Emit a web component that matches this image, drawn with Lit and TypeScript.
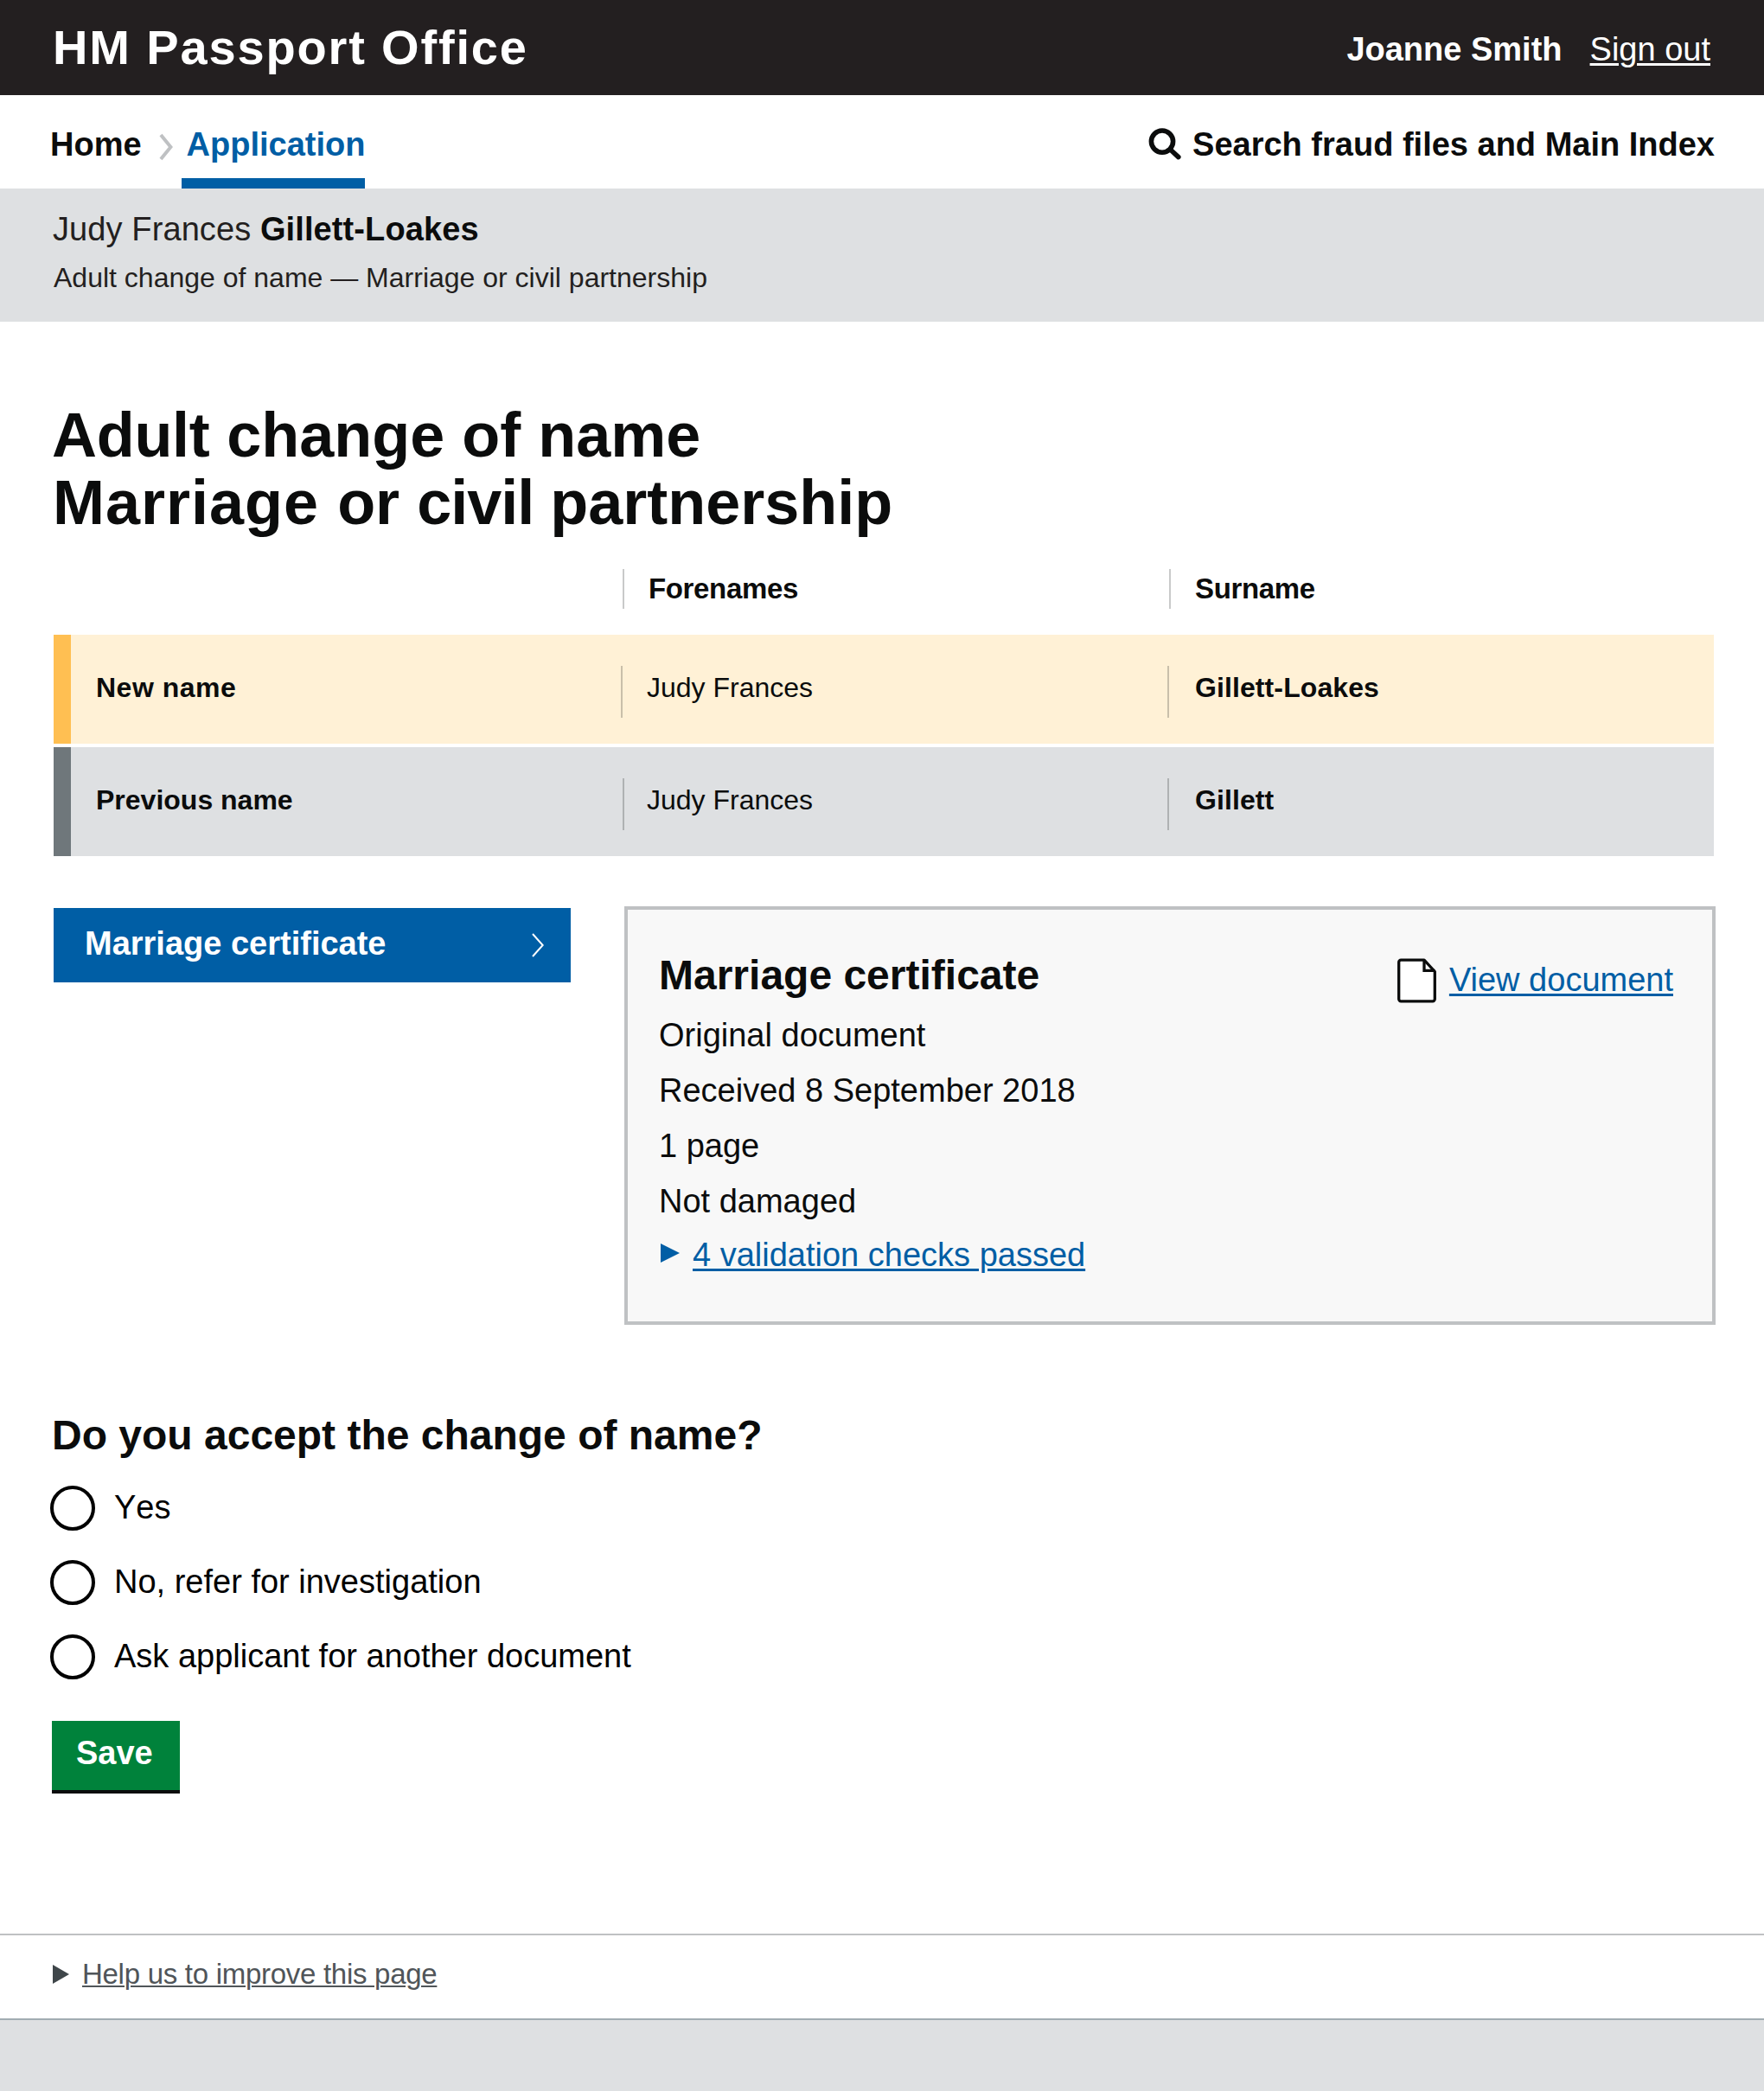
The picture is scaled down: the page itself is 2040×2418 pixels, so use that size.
import { LitElement, html, css, svg } from "lit";
import { customElement, state } from "lit/decorators.js";

interface NameRow {
  kind: "new" | "previous";
  label: string;
  forenames: string;
  surname: string;
}

const nameRows: NameRow[] = [
  { kind: "new", label: "New name", forenames: "Judy Frances", surname: "Gillett-Loakes" },
  { kind: "previous", label: "Previous name", forenames: "Judy Frances", surname: "Gillett" },
];

const documentFacts = ["Original document", "Received 8 September 2018", "1 page", "Not damaged"];

const options = ["Yes", "No, refer for investigation", "Ask applicant for another document"];

const chevron = (w: number, h: number, stroke: number) => html`
  <svg class="chevron" width=${w} height=${h} viewBox="0 0 ${w} ${h}" aria-hidden="true">
    ${svg`<path d="M${stroke / 2} ${stroke / 2}L${w - stroke * 0.65} ${h / 2}L${stroke / 2} ${h - stroke / 2}"
      fill="none" stroke="currentColor" stroke-width=${stroke} />`}
  </svg>
`;

@customElement("app-root")
export class AppRoot extends LitElement {
  @state() private selected = -1;

  static styles = css`
    :host {
      display: flex;
      flex-direction: column;
      min-height: 2418px;
      background: #fff;
      color: #0b0c0c;
      font-family: "Liberation Sans", Arial, Helvetica, sans-serif;
      font-size: 38px;
      line-height: 42px;
    }
    * {
      box-sizing: border-box;
    }
    h1, h2, p {
      margin: 0;
      font-weight: 400;
    }
    svg {
      display: block;
      flex: none;
    }
    a {
      color: inherit;
      text-decoration: none;
    }
    .link {
      color: #005ea5;
      text-decoration: underline;
      text-decoration-thickness: 3px;
      text-underline-offset: 3px;
    }
    .masthead {
      display: flex;
      justify-content: space-between;
      height: 110px;
      padding: 0 62px 0 61px;
      background: #231f20;
      color: #fff;
      white-space: nowrap;
    }
    .brand {
      font-size: 56px;
      line-height: 109px;
      font-weight: 700;
      letter-spacing: 1.85px;
    }
    .account {
      display: flex;
      gap: 32px;
      padding-top: 36px;
    }
    .account .link {
      color: #fff;
    }
    .nav {
      display: flex;
      justify-content: space-between;
      height: 108px;
      padding: 0 57px 0 58px;
      font-weight: 700;
      white-space: nowrap;
    }
    .crumbs {
      display: flex;
    }
    .crumb {
      padding-top: 36px;
    }
    .crumbs .chevron {
      margin: 44px 10px 0 20px;
      color: #bfc1c3;
    }
    .crumb.current {
      width: 212px;
      padding-left: 6px;
      border-bottom: 12px solid #005ea5;
      color: #005ea5;
    }
    .search {
      display: flex;
      gap: 13px;
      padding-top: 36px;
    }
    .search svg {
      margin-top: 2px;
    }
    .summary {
      height: 154px;
      padding: 26px 60px 0;
      background: #dee0e2;
      color: #231f20;
    }
    .person {
      padding-left: 1px;
      letter-spacing: 0.1px;
    }
    .person b {
      color: #0b0c0c;
    }
    .summary .change {
      margin: 17px 0 0 2px;
      font-size: 32px;
      line-height: 36px;
    }
    .main {
      padding: 92px 56px 0 60px;
    }
    h1 {
      font-size: 72px;
      line-height: 78px;
      font-weight: 700;
    }
    .tight {
      letter-spacing: -0.3px;
    }
    .tighter {
      letter-spacing: -1px;
    }
    .loose {
      padding-left: 1px;
      letter-spacing: 1px;
    }
    .names {
      display: flex;
      flex-direction: column;
      gap: 4px;
      width: 1920px;
      margin: 38px 0 0 2px;
      font-size: 32px;
    }
    .name-row {
      display: grid;
      grid-template-columns: 656px 632px 1fr;
      height: 126px;
      padding-top: 36px;
      line-height: 50px;
    }
    .name-row.head {
      height: 46px;
      margin-bottom: 26px;
      padding: 0;
      font-size: 33px;
      line-height: 45px;
      font-weight: 700;
    }
    .name-row.new {
      background: linear-gradient(to right, #ffbf52 20px, #fff1d6 20px);
    }
    .name-row.previous {
      background: linear-gradient(to right, #6f777b 20px, #dee0e2 20px);
    }
    .label {
      padding-left: 49px;
      font-weight: 700;
      letter-spacing: 0;
    }
    .new .label {
      letter-spacing: 0.5px;
    }
    .cell {
      height: 60px;
      padding-left: 28px;
      border-left: 2px solid rgba(11, 12, 12, 0.22);
    }
    .cell.surname {
      padding-left: 30px;
      font-weight: 700;
      letter-spacing: 0.1px;
    }
    .head .cell {
      height: 46px;
      margin-left: 2px;
      padding-left: 28px;
      letter-spacing: -0.35px;
    }
    .head .cell.surname {
      margin-left: 2px;
      padding-left: 28px;
    }
    .previous .forenames {
      margin-left: 2px;
      padding-left: 26px;
    }
    .evidence {
      display: flex;
      justify-content: space-between;
      margin: 58px 0 0 2px;
    }
    .tab {
      display: flex;
      justify-content: space-between;
      width: 598px;
      height: 86px;
      margin-top: 2px;
      padding: 20px 31px 0 36px;
      background: #005ea5;
      color: #fff;
      font-weight: 700;
    }
    .tab .chevron {
      margin-top: 9px;
    }
    .card {
      width: 1262px;
      height: 484px;
      padding: 0 45px 0 36px;
      border: 4px solid #bfc1c3;
      background: #f8f8f8;
    }
    .card-head {
      display: flex;
      justify-content: space-between;
      height: 113px;
    }
    h2 {
      font-size: 48px;
      line-height: 53px;
      font-weight: 700;
    }
    .card h2 {
      margin-top: 49px;
    }
    .view {
      display: flex;
      gap: 15px;
      padding-top: 56px;
    }
    .view .link {
      margin-top: 4px;
    }
    .fact {
      line-height: 64px;
    }
    .checks {
      display: flex;
      gap: 15px;
      padding-left: 2px;
      line-height: 60px;
    }
    .checks svg {
      margin-top: 17px;
      color: #005ea5;
    }
    .question {
      margin-top: 101px;
    }
    .options {
      display: flex;
      flex-direction: column;
      gap: 34px;
      margin: 32px 0 0 -2px;
    }
    .option {
      display: flex;
      gap: 22px;
      height: 52px;
      color: #000;
      font-kerning: none;
    }
    .radio {
      display: flex;
      align-items: center;
      justify-content: center;
      width: 52px;
      height: 52px;
      border: 4px solid #000;
      border-radius: 50%;
    }
    .dot {
      width: 26px;
      height: 26px;
      border-radius: 50%;
      background: #000;
    }
    .option-label {
      padding-top: 4px;
    }
    .save {
      display: flex;
      align-items: flex-start;
      width: 148px;
      height: 84px;
      margin-top: 48px;
      padding: 16px 0 0 28px;
      border: 0;
      border-bottom: 4px solid #0b0c0c;
      background: #00823b;
      color: #fff;
      font: inherit;
      font-weight: 700;
    }
    .feedback {
      display: flex;
      gap: 15px;
      height: 98px;
      margin-top: 162px;
      padding: 26px 61px 0;
      border-top: 2px solid #bfc1c3;
      font-size: 33px;
      line-height: 37px;
      color: #3f464a;
    }
    .feedback svg {
      margin-top: 8px;
    }
    .feedback .link {
      color: #505559;
      letter-spacing: -0.28px;
      text-decoration-thickness: 2px;
      text-underline-offset: 2px;
    }
    .footer {
      flex: 1;
      border-top: 2px solid #a1acb2;
      background: #dee0e2;
    }
  `;

  private renderNames() {
    return html`
      <div class="names">
        <div class="name-row head">
          <span></span>
          <span class="cell">Forenames</span>
          <span class="cell surname">Surname</span>
        </div>
        ${nameRows.map(
          (row) => html`
            <div class="name-row ${row.kind}">
              <span class="label">${row.label}</span>
              <span class="cell forenames">${row.forenames}</span>
              <span class="cell surname">${row.surname}</span>
            </div>
          `
        )}
      </div>
    `;
  }

  private renderEvidence() {
    return html`
      <section class="evidence">
        <a class="tab"><span>Marriage certificate</span>${chevron(14, 28, 2)}</a>
        <article class="card">
          <div class="card-head">
            <h2>Marriage certificate</h2>
            <div class="view">
              <svg width="45" height="52" viewBox="0 0 45 52" aria-hidden="true">
                <path d="M4.2 2.2H31L43.3 15.5V47.3a2.5 2.5 0 0 1-2.5 2.5H4.2a2.5 2.5 0 0 1-2.5-2.5V4.7a2.5 2.5 0 0 1 2.5-2.5z"
                  fill="#fff" stroke="#0b0c0c" stroke-width="3.3" stroke-linejoin="round" />
                <path d="M31 2.2V14.3H43.3" fill="none" stroke="#0b0c0c" stroke-width="3.3" />
              </svg>
              <a class="link">View document</a>
            </div>
          </div>
          ${documentFacts.map((fact) => html`<p class="fact">${fact}</p>`)}
          <div class="checks">
            <svg width="22" height="22" viewBox="0 0 22 22" aria-hidden="true">
              <path d="M0 0L22 11L0 22z" fill="currentColor" />
            </svg>
            <a class="link">4 validation checks passed</a>
          </div>
        </article>
      </section>
    `;
  }

  render() {
    return html`
      <header class="masthead">
        <span class="brand">HM Passport Office</span>
        <div class="account"><b>Joanne Smith</b><a class="link">Sign out</a></div>
      </header>
      <nav class="nav">
        <div class="crumbs">
          <a class="crumb">Home</a>
          ${chevron(16, 32, 4)}
          <a class="crumb current">Application</a>
        </div>
        <a class="search">
          <svg width="38" height="37" viewBox="0 0 38 37" aria-hidden="true">
            <circle cx="16" cy="15.6" r="12.6" fill="none" stroke="#0b0c0c" stroke-width="5.6" />
            <path d="M25.5 25L34.8 33.6" stroke="#0b0c0c" stroke-width="5.6" stroke-linecap="round" />
          </svg>
          <span>Search fraud files and Main Index</span>
        </a>
      </nav>
      <div class="summary">
        <p class="person">Judy Frances <b>Gillett-Loakes</b></p>
        <p class="change">Adult change of name — Marriage or civil partnership</p>
      </div>
      <main class="main">
        <h1>
          <span class="tight">Adult </span>change of name<br />
          <span class="loose">Marriage </span>or <span class="tighter">civil </span>partnership
        </h1>
        ${this.renderNames()} ${this.renderEvidence()}
        <h2 class="question">Do you accept the change of name?</h2>
        <div class="options" role="radiogroup">
          ${options.map(
            (label, i) => html`
              <div class="option" role="radio" aria-checked=${this.selected === i} @click=${() => (this.selected = i)}>
                <span class="radio">${this.selected === i ? html`<span class="dot"></span>` : ""}</span>
                <span class="option-label">${label}</span>
              </div>
            `
          )}
        </div>
        <button class="save">Save</button>
      </main>
      <div class="feedback">
        <svg width="19" height="22" viewBox="0 0 19 22" aria-hidden="true">
          <path d="M0 0L19 11L0 22z" fill="currentColor" />
        </svg>
        <a class="link">Help us to improve this page</a>
      </div>
      <footer class="footer"></footer>
    `;
  }
}
